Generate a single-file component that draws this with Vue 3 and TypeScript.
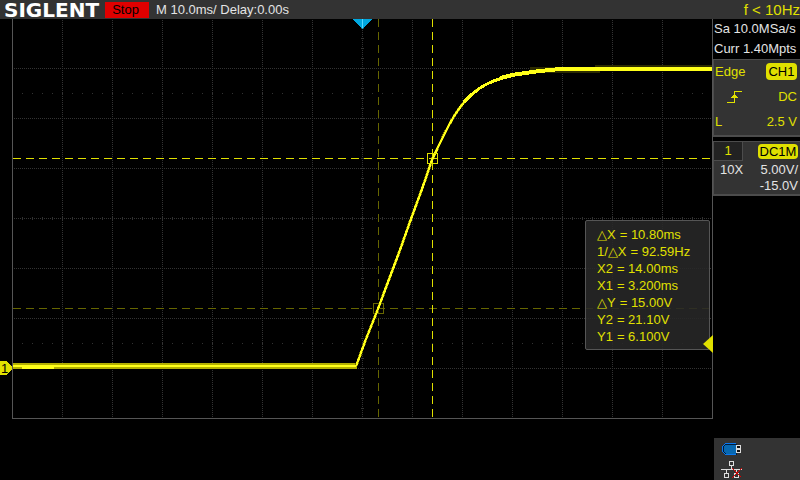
<script setup lang="ts">
interface Reading {
  label: string
  value: string
}

const readings: Reading[] = [
  { label: '△X', value: '10.80ms' },
  { label: '1/△X', value: '92.59Hz' },
  { label: 'X2', value: '14.00ms' },
  { label: 'X1', value: '3.200ms' },
  { label: '△Y', value: '15.00V' },
  { label: 'Y2', value: '21.10V' },
  { label: 'Y1', value: '6.100V' },
]

// Graticule: 14 x 8 divisions of 50 units each
const left = 12
const top = 18
const right = 712
const bottom = 418
const centreX = 362
const centreY = 218

const range = (from: number, to: number, step: number): number[] => {
  const out: number[] = []
  for (let v = from; v < to; v += step) out.push(v)
  return out
}

const columns = range(left + 50, right, 50)
const rows = range(top + 50, bottom, 50)
const minorX = range(left + 10, right, 10)
const minorY = range(top + 10, bottom, 10)

const edge =
  'M356 366 L358 361 L366 339 L378 309 L385 290 L400 250 L411 219 L422 189 L432 160 C446 130 458 102 480 88'
const knee = 'M464 102 Q471 94 480 88 C492 80 505 77 525 73'
const plateau = 'M500 78 L512 75 L525 73 L540 71 L560 69 L712 69'
</script>

<template>
  <div class="scope">
    <header class="topbar">
      <h1 class="brand">SIGLENT</h1>
      <button class="run" type="button">Stop</button>
      <span class="timebase">M 10.0ms/ Delay:0.00s</span>
      <span class="frequency">f &lt; 10Hz</span>
    </header>

    <main class="display">
      <svg class="plot" viewBox="0 19 713 400" role="img" aria-label="Channel 1 waveform">
        <g class="grid">
          <line v-for="x in columns" :key="'c' + x" :x1="x + 0.5" :x2="x + 0.5" y1="20" :y2="bottom" />
          <line v-for="y in rows" :key="'r' + y" x1="14" :x2="right" :y1="y + 0.5" :y2="y + 0.5" />
        </g>
        <g class="ticks">
          <rect v-for="x in minorX" :key="'t' + x" :x="x" :y="centreY - 1" width="1" height="3" />
          <rect v-for="y in minorY" :key="'u' + y" :x="centreX - 1" :y="y" width="3" height="1" />
          <rect v-for="x in minorX" :key="'a' + x" :x="x" y="93" width="1" height="1" />
          <rect v-for="x in minorX" :key="'b' + x" :x="x" y="343" width="1" height="1" />
        </g>
        <path class="frame" d="M12.5 19 V418.5 H712.5 V19" />

        <path class="halo" d="M13 366 H357" />
        <path class="halo-fine" :d="edge" />
        <path class="halo-top" d="M530 70 H600 M595 68 H712" />

        <path class="cursor dim" d="M378.5 19 V418" />
        <path class="cursor dim" d="M13 308.5 H712" />
        <rect class="handle dim" x="373.5" y="303.5" width="10" height="10" />
        <path class="cursor" d="M432.5 19 V418" />
        <path class="cursor" d="M13 158.5 H712" />

        <path class="trace" d="M13 366 H356 M22 368 H54" />
        <path class="trace" :d="edge" />
        <path class="trace knee" :d="knee" />
        <path class="trace plateau" :d="plateau" />
        <rect class="handle" x="427.5" y="153.5" width="10" height="10" />

        <path class="delay" d="M353 19 H372 L362.5 29 Z" />
        <path class="delay-mid" d="M362.5 19 V28" />
        <path class="channel" d="M0 361 H6 L12 367 V369 L6 375 H0 Z" />
        <text class="channel-label" x="1" y="373">1</text>
      </svg>

      <dl class="readout">
        <div v-for="r in readings" :key="r.label" class="reading">
          <dt>{{ r.label }}</dt>
          <dd>= {{ r.value }}</dd>
        </div>
      </dl>
      <svg class="level" viewBox="0 0 10 18" aria-hidden="true"><path d="M10 0 V18 L0 9 Z" /></svg>
    </main>

    <aside class="side">
      <section class="acquire">
        <p>Sa 10.0MSa/s</p>
        <p>Curr 1.40Mpts</p>
      </section>

      <section class="panel trigger">
        <div class="line"><span>Edge</span><span class="badge ch">CH1</span></div>
        <div class="line">
          <svg class="rise" viewBox="0 0 16 14" aria-hidden="true">
            <path class="stroke" d="M1 12.5 H8.5 V1.5 H16" />
            <path class="arrow" d="M8 4 H9 L12 8 H5 Z" />
          </svg>
          <span>DC</span>
        </div>
        <div class="line"><span>L</span><span>2.5 V</span></div>
      </section>

      <section class="panel input">
        <div class="head"><span class="number">1</span><span class="badge">DC1M</span></div>
        <div class="scale"><span>10X</span><span>5.00V/</span></div>
        <div class="offset">-15.0V</div>
      </section>

      <footer class="status">
        <svg class="usb" viewBox="0 0 20 12" aria-hidden="true">
          <path class="usb-body" d="M14 1 H4 L1 4 V8 L4 11 H14 Z" />
          <path class="usb-edge" d="M14 .5 H3.5 L.5 3.5 V8.5 L3.5 11.5 H14" />
          <path class="usb-plug" d="M14 2 H19 V10 H14 Z" />
          <path class="usb-hole" d="M15 3 H18 V5 H15 Z M15 7 H18 V9 H15 Z" />
        </svg>
        <svg class="lan" viewBox="0 0 21 18" aria-hidden="true">
          <path class="lan-net" d="M8.5 1.5 H12.5 V5.5 H8.5 Z M10.5 6 V9 M0 9.5 H21 M5.5 10 V13 M3.5 13.5 H7.5 V17.5 H3.5 Z M15.5 10 V13 M13.5 13.5 H17.5 V17.5 H13.5 Z" />
          <path class="lan-off" d="M11 8 L20 17 M21 8 L11 18" />
        </svg>
      </footer>
    </aside>
  </div>
</template>

<style>
html,
body {
  margin: 0;
  background: #000;
}
</style>

<style scoped>
.scope {
  display: grid;
  grid-template-columns: minmax(0, 1fr) 87px;
  grid-template-rows: 19px 1fr;
  min-height: 100vh;
  background: #000;
  color: #e4e4e4;
  font: 13px/20px "Liberation Sans", Arial, sans-serif;
}
.topbar {
  grid-column: 1 / -1;
  display: flex;
  align-items: center;
  background: #333;
  white-space: nowrap;
}
.brand {
  flex: none;
  align-self: flex-start;
  width: 101px;
  margin: 0;
  padding-left: 4px;
  box-sizing: border-box;
  color: #fff;
  font: bold 20px/21px "DejaVu Sans", Verdana, sans-serif;
}
.run {
  width: 44px;
  height: 16px;
  margin: 0 7px 0 4px;
  padding: 0 3px 0 0;
  border: 0;
  background: #e00000;
  color: #000;
  font: 13px/16px "Liberation Sans", Arial, sans-serif;
}
.frequency {
  margin-left: auto;
  color: #e0e000;
  font-size: 15px;
}
.display {
  position: relative;
  align-self: start;
}
.plot {
  display: block;
  width: 100%;
  shape-rendering: crispEdges;
}
.grid line {
  stroke: #333;
  stroke-dasharray: 1 1;
}
.ticks rect {
  fill: #333;
}
.frame {
  fill: none;
  stroke: #555;
}
.cursor {
  stroke: #e0e000;
  stroke-dasharray: 8 5;
}
.cursor.dim {
  stroke: #666600;
}
.handle {
  fill: none;
  stroke: #e0e000;
}
.handle.dim {
  stroke: #666600;
}
.halo {
  stroke: #b4b000;
  stroke-width: 6;
}
.halo-fine {
  fill: none;
  stroke: #777300;
  stroke-width: 3;
}
.halo-top {
  stroke: #2c2b00;
  stroke-width: 6;
}
.trace {
  fill: none;
  stroke: #ffff19;
  stroke-width: 2;
}
.trace.knee {
  stroke-width: 3;
}
.trace.plateau {
  stroke-width: 4;
}
.delay {
  fill: #00a8e0;
}
.delay-mid {
  stroke: #55d8ff;
}
.channel {
  fill: #e0e000;
}
.channel-label {
  fill: #000;
  font-size: 13px;
}
.readout {
  position: absolute;
  top: 50%;
  right: 3px;
  display: grid;
  box-sizing: border-box;
  width: 125px;
  margin: 1px 0 0;
  padding: 5px 11px 4px;
  border: 1px solid #555;
  border-radius: 2px;
  background: rgba(40, 40, 40, 0.88);
  color: #e0e000;
  line-height: 17px;
  white-space: nowrap;
}
.reading {
  display: flex;
  gap: 4px;
}
.reading dd {
  margin: 0;
}
.level {
  position: absolute;
  top: 79%;
  right: 0;
  width: 10px;
  height: 18px;
  fill: #e0e000;
}
.side {
  display: flex;
  flex-direction: column;
  white-space: nowrap;
}
.acquire {
  height: 40px;
  padding-left: 1px;
}
.acquire p {
  margin: 0;
}
.panel {
  border: 1px solid #4c4c4c;
  border-right: 0;
  border-bottom-width: 2px;
  background: #333;
}
.trigger {
  display: grid;
  margin-bottom: 4px;
  color: #e0e000;
}
.line {
  display: flex;
  align-items: center;
  justify-content: space-between;
  box-sizing: border-box;
  height: 25px;
  padding: 0 3px 2px 1px;
}
.badge {
  border-radius: 4px;
  background: #e0e000;
  color: #000;
  line-height: 15px;
  text-align: center;
  width: 40px;
}
.badge.ch {
  width: 31px;
  line-height: 17px;
}
.rise {
  width: 16px;
  height: 14px;
  margin-left: 11px;
  shape-rendering: crispEdges;
}
.rise .stroke {
  fill: none;
  stroke: #e0e000;
}
.rise .arrow {
  fill: #e0e000;
}
.head {
  display: flex;
  align-items: center;
  justify-content: space-between;
  height: 19px;
  padding-right: 2px;
}
.number {
  width: 28px;
  border-right: 1px solid #4c4c4c;
  border-bottom: 1px solid #4c4c4c;
  background: #222;
  color: #e0e000;
  line-height: 18px;
  text-align: center;
}
.scale {
  display: flex;
  justify-content: space-between;
  padding: 0 2px 0 6px;
  line-height: 17px;
}
.offset {
  padding-right: 2px;
  line-height: 16px;
  text-align: right;
}
.status {
  display: flex;
  flex-direction: column;
  gap: 5px;
  height: 37px;
  margin: auto 0 0 1px;
  padding: 5px 0 0 7px;
  background: #333;
}
.usb {
  width: 20px;
  height: 12px;
  margin-left: 1px;
  shape-rendering: crispEdges;
}
.usb-body {
  fill: #0868b0;
  stroke: #001a38;
}
.usb-edge {
  fill: none;
  stroke: #0a78f0;
}
.usb-plug {
  fill: #ddd;
}
.usb-hole {
  fill: #111;
}
.lan {
  width: 21px;
  height: 18px;
  fill: none;
  shape-rendering: crispEdges;
}
.lan-net {
  stroke: #ddd;
}
.lan-off {
  stroke: #e00000;
}
</style>
